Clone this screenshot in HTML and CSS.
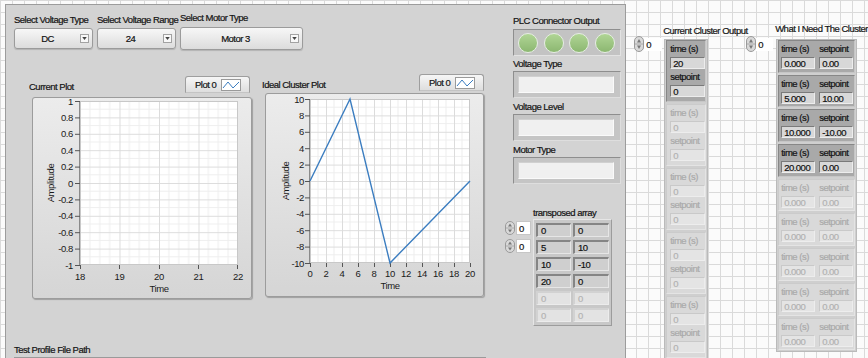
FILE: index.html
```html
<!DOCTYPE html>
<html lang="en">
<head>
    <meta charset="UTF-8">
    <meta name="viewport" content="width=device-width, initial-scale=1.0">
    <title>Test Profile Panel</title>
    <link rel="stylesheet" href="styles.css">
</head>
<body>
<div class="screen">
    <div class="panel">
        <div class="panel-main">
            <div class="selectors">
                <div class="select-group">
                    <div class="field-label">Select Voltage Type</div>
                    <div class="dropdown"><span class="value">DC</span><span class="drop-btn"><svg width="6" height="4" viewBox="0 0 6 4"><path d="M0 0H6L3 4Z" fill="#444"/></svg></span></div>
                </div>
                <div class="select-group">
                    <div class="field-label">Select Voltage Range</div>
                    <div class="dropdown"><span class="value">24</span><span class="drop-btn"><svg width="6" height="4" viewBox="0 0 6 4"><path d="M0 0H6L3 4Z" fill="#444"/></svg></span></div>
                </div>
                <div class="select-group wide">
                    <div class="field-label">Select Motor Type</div>
                    <div class="dropdown"><span class="value">Motor 3</span><span class="drop-btn"><svg width="6" height="4" viewBox="0 0 6 4"><path d="M0 0H6L3 4Z" fill="#444"/></svg></span></div>
                </div>
            </div>

            <div class="plots">
                <div class="plot plot-current">
                    <div class="plot-head">
                        <span class="plot-title">Current Plot</span>
                        <div class="legend"><span>Plot 0</span><svg width="20" height="12" viewBox="0 0 20 12"><rect x="0.5" y="0.5" width="19" height="11" fill="#fff" stroke="#9a9a9a"/><polyline points="2,9 7,3 12,9 18,3" fill="none" stroke="#3b7dc0"/></svg></div>
                    </div>
                    <div class="plot-frame">
                        <svg class="graph" width="220" height="202" viewBox="0 0 220 202">
                            <defs>
                                <pattern id="grid1" x="48" y="4" width="39.5" height="16.4" patternUnits="userSpaceOnUse">
                                    <path d="M9.875 0V16.4M19.75 0V16.4M29.625 0V16.4M0 8.2H39.5" stroke="#eeeeee"/>
                                    <path d="M0.5 0V16.4M0 0.5H39.5" stroke="#dcdcdc"/>
                                </pattern>
                            </defs>
                            <rect x="48" y="4" width="158" height="164" fill="#fff"/>
                            <rect x="48" y="4" width="158" height="164" fill="url(#grid1)"/>
                            <rect x="48.5" y="4.5" width="157" height="163" fill="none" stroke="#c8c8c8"/>
                            <path d="M47.5 4V168.5" stroke="#8a8a8a"/>
                            <path d="M43 4.5H48M43 20.9H48M43 37.3H48M43 53.7H48M43 70.1H48M43 86.5H48M43 102.9H48M43 119.3H48M43 135.7H48M43 152.1H48M43 168.5H48" stroke="#555"/>
                            <path d="M48.5 168V172M87.5 168V172M127.5 168V172M166.5 168V172M205.5 168V172" stroke="#555"/>
                            <g class="tick" text-anchor="end">
                                <text x="41" y="7.5">1</text>
                                <text x="41" y="23.9">0.8</text>
                                <text x="41" y="40.3">0.6</text>
                                <text x="41" y="56.7">0.4</text>
                                <text x="41" y="73.1">0.2</text>
                                <text x="41" y="89.5">0</text>
                                <text x="41" y="105.9">-0.2</text>
                                <text x="41" y="122.3">-0.4</text>
                                <text x="41" y="138.7">-0.6</text>
                                <text x="41" y="155.1">-0.8</text>
                                <text x="41" y="171.5">-1</text>
                            </g>
                            <g class="tick" text-anchor="middle">
                                <text x="48" y="183">18</text>
                                <text x="87.5" y="183">19</text>
                                <text x="127" y="183">20</text>
                                <text x="166.5" y="183">21</text>
                                <text x="206" y="183">22</text>
                                <text x="127" y="195">Time</text>
                                <text transform="translate(22,86) rotate(-90)">Amplitude</text>
                            </g>
                        </svg>
                    </div>
                </div>

                <div class="plot plot-ideal">
                    <div class="plot-head">
                        <span class="plot-title">Ideal Cluster Plot</span>
                        <div class="legend"><span>Plot 0</span><svg width="20" height="12" viewBox="0 0 20 12"><rect x="0.5" y="0.5" width="19" height="11" fill="#fff" stroke="#9a9a9a"/><polyline points="2,9 7,3 12,9 18,3" fill="none" stroke="#3b7dc0"/></svg></div>
                    </div>
                    <div class="plot-frame">
                        <svg class="graph" width="219" height="204" viewBox="0 0 219 204">
                            <defs>
                                <pattern id="grid2" x="45" y="6" width="16" height="16.4" patternUnits="userSpaceOnUse">
                                    <path d="M8 0V16.4M0 8.2H16" stroke="#eeeeee"/>
                                    <path d="M0.5 0V16.4M0 0.5H16" stroke="#dcdcdc"/>
                                </pattern>
                            </defs>
                            <rect x="45" y="6" width="160" height="164" fill="#fff"/>
                            <rect x="45" y="6" width="160" height="164" fill="url(#grid2)"/>
                            <rect x="45.5" y="6.5" width="159" height="163" fill="none" stroke="#c8c8c8"/>
                            <path d="M44.5 6V170.5" stroke="#8a8a8a"/>
                            <path d="M40 6.5H45M40 22.9H45M40 39.3H45M40 55.7H45M40 72.1H45M40 88.5H45M40 104.9H45M40 121.3H45M40 137.7H45M40 154.1H45M40 170.5H45" stroke="#555"/>
                            <path d="M45.5 170V174M61.5 170V174M77.5 170V174M93.5 170V174M109.5 170V174M125.5 170V174M141.5 170V174M157.5 170V174M173.5 170V174M189.5 170V174M205.5 170V174" stroke="#555"/>
                            <polyline points="45,88 85,6 125,170 205,88" fill="none" stroke="#3b7dc0" stroke-width="1.4"/>
                            <g class="tick" text-anchor="end">
                                <text x="39" y="9.5">10</text>
                                <text x="39" y="25.9">8</text>
                                <text x="39" y="42.3">6</text>
                                <text x="39" y="58.7">4</text>
                                <text x="39" y="75.1">2</text>
                                <text x="39" y="91.5">0</text>
                                <text x="39" y="107.9">-2</text>
                                <text x="39" y="124.3">-4</text>
                                <text x="39" y="140.7">-6</text>
                                <text x="39" y="157.1">-8</text>
                                <text x="39" y="173.5">-10</text>
                            </g>
                            <g class="tick" text-anchor="middle">
                                <text x="45" y="183.5">0</text>
                                <text x="61" y="183.5">2</text>
                                <text x="77" y="183.5">4</text>
                                <text x="93" y="183.5">6</text>
                                <text x="109" y="183.5">8</text>
                                <text x="125" y="183.5">10</text>
                                <text x="141" y="183.5">12</text>
                                <text x="157" y="183.5">14</text>
                                <text x="173" y="183.5">16</text>
                                <text x="189" y="183.5">18</text>
                                <text x="205" y="183.5">20</text>
                                <text x="125" y="195.5">Time</text>
                                <text transform="translate(24,88) rotate(-90)">Amplitude</text>
                            </g>
                        </svg>
                    </div>
                </div>
            </div>

            <div class="field-label file-label">Test Profile File Path</div>
            <div class="path-box"></div>
        </div>

        <div class="panel-side">
            <div class="field-label side-label first">PLC Connector Output</div>
            <div class="led-box">
                <span class="led"></span><span class="led"></span><span class="led"></span><span class="led"></span>
            </div>
            <div class="field-label side-label">Voltage Type</div>
            <div class="text-ind"><div class="field"></div></div>
            <div class="field-label side-label">Voltage Level</div>
            <div class="text-ind"><div class="field"></div></div>
            <div class="field-label side-label">Motor Type</div>
            <div class="text-ind"><div class="field"></div></div>

            <div class="field-label array-label">transposed array</div>
            <div class="array2d">
                <div class="index-col">
                    <div class="index boxed">
                        <svg class="spin" width="10" height="14" viewBox="0 0 10 14"><rect x="0.5" y="0.5" width="9" height="13" rx="4.5" fill="#d9d9d9" stroke="#9a9a9a"/><path d="M5 2.5L7 5.5H3Z" fill="#777"/><path d="M5 11.5L7 8.5H3Z" fill="#777"/><path d="M1 7H9" stroke="#aaa"/></svg>
                        <span class="idx-val">0</span>
                    </div>
                    <div class="index boxed">
                        <svg class="spin" width="10" height="14" viewBox="0 0 10 14"><rect x="0.5" y="0.5" width="9" height="13" rx="4.5" fill="#d9d9d9" stroke="#9a9a9a"/><path d="M5 2.5L7 5.5H3Z" fill="#777"/><path d="M5 11.5L7 8.5H3Z" fill="#777"/><path d="M1 7H9" stroke="#aaa"/></svg>
                        <span class="idx-val">0</span>
                    </div>
                </div>
                <div class="matrix">
                    <span class="cell">0</span><span class="cell">0</span>
                    <span class="cell">5</span><span class="cell">10</span>
                    <span class="cell">10</span><span class="cell">-10</span>
                    <span class="cell">20</span><span class="cell">0</span>
                    <span class="cell off">0</span><span class="cell off">0</span>
                    <span class="cell off">0</span><span class="cell off">0</span>
                </div>
            </div>
        </div>
    </div>

    <div class="cluster-area">
        <div class="cluster-group current">
            <div class="index">
                <svg class="spin" width="10" height="16" viewBox="0 0 10 16"><rect x="0.5" y="0.5" width="9" height="15" rx="4.5" fill="#d9d9d9" stroke="#9a9a9a"/><path d="M5 3L7 6.5H3Z" fill="#777"/><path d="M5 13L7 9.5H3Z" fill="#777"/><path d="M1 8H9" stroke="#aaa"/></svg>
                <span class="idx-val">0</span>
            </div>
            <div class="cluster-col">
                <div class="field-label">Current Cluster Output</div>
                <div class="cluster-frame">
                    <div class="cl-item on">
                        <div class="cl-label">time (s)</div><div class="cl-num">20</div>
                        <div class="cl-label">setpoint</div><div class="cl-num">0</div>
                    </div>
                    <div class="cl-item off">
                        <div class="cl-label">time (s)</div><div class="cl-num">0</div>
                        <div class="cl-label">setpoint</div><div class="cl-num">0</div>
                    </div>
                    <div class="cl-item off">
                        <div class="cl-label">time (s)</div><div class="cl-num">0</div>
                        <div class="cl-label">setpoint</div><div class="cl-num">0</div>
                    </div>
                    <div class="cl-item off">
                        <div class="cl-label">time (s)</div><div class="cl-num">0</div>
                        <div class="cl-label">setpoint</div><div class="cl-num">0</div>
                    </div>
                    <div class="cl-item off">
                        <div class="cl-label">time (s)</div><div class="cl-num">0</div>
                        <div class="cl-label">setpoint</div><div class="cl-num">0</div>
                    </div>
                </div>
            </div>
        </div>

        <div class="cluster-group needed">
            <div class="index">
                <svg class="spin" width="10" height="16" viewBox="0 0 10 16"><rect x="0.5" y="0.5" width="9" height="15" rx="4.5" fill="#d9d9d9" stroke="#9a9a9a"/><path d="M5 3L7 6.5H3Z" fill="#777"/><path d="M5 13L7 9.5H3Z" fill="#777"/><path d="M1 8H9" stroke="#aaa"/></svg>
                <span class="idx-val">0</span>
            </div>
            <div class="cluster-col">
                <div class="field-label">What I Need The Cluster</div>
                <div class="cluster-frame">
                    <div class="pair on"><span class="cl-label">time (s)</span><span class="cl-label">setpoint</span><span class="cl-num">0.000</span><span class="cl-num">0.00</span></div>
                    <div class="pair on"><span class="cl-label">time (s)</span><span class="cl-label">setpoint</span><span class="cl-num">5.000</span><span class="cl-num">10.00</span></div>
                    <div class="pair on"><span class="cl-label">time (s)</span><span class="cl-label">setpoint</span><span class="cl-num">10.000</span><span class="cl-num">-10.00</span></div>
                    <div class="pair on"><span class="cl-label">time (s)</span><span class="cl-label">setpoint</span><span class="cl-num">20.000</span><span class="cl-num">0.00</span></div>
                    <div class="pair off"><span class="cl-label">time (s)</span><span class="cl-label">setpoint</span><span class="cl-num">0.000</span><span class="cl-num">0.00</span></div>
                    <div class="pair off"><span class="cl-label">time (s)</span><span class="cl-label">setpoint</span><span class="cl-num">0.000</span><span class="cl-num">0.00</span></div>
                    <div class="pair off"><span class="cl-label">time (s)</span><span class="cl-label">setpoint</span><span class="cl-num">0.000</span><span class="cl-num">0.00</span></div>
                    <div class="pair off"><span class="cl-label">time (s)</span><span class="cl-label">setpoint</span><span class="cl-num">0.000</span><span class="cl-num">0.00</span></div>
                    <div class="pair off"><span class="cl-label">time (s)</span><span class="cl-label">setpoint</span><span class="cl-num">0.000</span><span class="cl-num">0.00</span></div>
                </div>
            </div>
        </div>
    </div>
</div>
</body>
</html>
```

FILE: styles.css
```css
body {
    margin: 0;
    width: 868px;
    height: 358px;
    overflow: hidden;
    font-family: "Liberation Sans", Arial, sans-serif;
    font-size: 9.5px;
    line-height: 12px;
    letter-spacing: -0.5px;
    color: #141414;
    -webkit-text-stroke: 0.2px currentColor;
    background-color: #fbfbfb;
    background-image: linear-gradient(#dadada 1px, transparent 1px), linear-gradient(90deg, #dadada 1px, transparent 1px);
    background-size: 12px 12px;
}
.screen {
    display: flex;
    align-items: flex-start;
}
.panel {
    width: 624px;
    height: 362px;
    margin: 4px 0 0 5px;
    box-sizing: border-box;
    padding-left: 8px;
    background: #d3d3d3;
    border: 1px solid #9c9c9c;
    display: flex;
}
.field-label {
    height: 12px;
    line-height: 12px;
    white-space: nowrap;
}

/* selectors */
.panel-main {
    width: 491px;
    display: flex;
    flex-direction: column;
}
.selectors {
    display: flex;
    gap: 4px;
    margin-top: 9px;
}
.select-group {
    width: 79px;
}
.select-group .field-label {
    margin-bottom: 2px;
}
.select-group.wide {
    width: 123px;
    margin-top: -2px;
}
.select-group.wide .field-label {
    margin-bottom: 3px;
}
.dropdown {
    height: 21px;
    box-sizing: border-box;
    border: 1px solid #9b9b9b;
    border-radius: 3px;
    background: linear-gradient(#f7f7f7, #dcdcdc);
    box-shadow: 0 1px 1px rgba(0,0,0,0.15);
    display: flex;
    align-items: center;
}
.wide .dropdown {
    height: 23px;
}
.dropdown .value {
    flex: 1;
    text-align: center;
    color: #111;
}
.drop-btn {
    width: 9px;
    height: 9px;
    margin-right: 3px;
    box-sizing: border-box;
    border: 1px solid #a2a2a2;
    background: #f8f8f8;
    display: flex;
    align-items: center;
    justify-content: center;
}
.drop-btn svg {
    width: 5px;
    height: 3px;
}

/* plots */
.plots {
    display: flex;
    align-items: flex-start;
    margin-top: 24px;
}
.plot-current {
    width: 223px;
    margin: 2px 0 0 15px;
}
.plot-ideal {
    width: 222px;
    margin-left: 10px;
}
.plot-head {
    height: 17px;
    display: flex;
    justify-content: space-between;
    align-items: flex-end;
}
.plot-current .legend {
    margin-right: 2px;
}
.legend {
    width: 65px;
    height: 17px;
    box-sizing: border-box;
    padding-left: 9px;
    border: 1px solid #9e9e9e;
    border-bottom-color: #c4c4c4;
    border-radius: 3px 3px 0 0;
    background: linear-gradient(#f6f6f6, #dedede);
    display: flex;
    align-items: center;
    gap: 5px;
}
.legend svg {
    display: block;
}
.plot-frame {
    margin-left: 3px;
    border-radius: 3px;
    background: linear-gradient(#ececec, #d5d5d5);
    box-shadow: inset 0 0 0 1px #9c9c9c, 1px 1px 1px rgba(0,0,0,0.25);
}
.plot-current .plot-frame {
    width: 220px;
    height: 202px;
    margin-top: 4px;
}
.plot-ideal .plot-frame {
    width: 219px;
    height: 204px;
    margin-top: 2px;
}
.graph {
    display: block;
}
.tick {
    font-family: "Liberation Sans", Arial, sans-serif;
    font-size: 9.5px;
    letter-spacing: -0.4px;
    fill: #1a1a1a;
}
.file-label {
    margin-top: 45px;
}
.path-box {
    width: 470px;
    height: 20px;
    margin-top: 1px;
    border: 1px solid #9a9a9a;
    background: #efefef;
}

/* right column of the panel */
.panel-side {
    width: 116px;
    display: flex;
    flex-direction: column;
}
.side-label {
    margin: 3px 0 0 8px;
}
.side-label.first {
    margin-top: 10px;
}
.led-box + .side-label {
    margin-top: 2px;
}
.led-box {
    width: 108px;
    height: 27px;
    margin: 2px 0 0 8px;
    box-sizing: border-box;
    padding-left: 4px;
    background: #c3c3c3;
    border: 1px solid;
    border-color: #8e8e8e #e2e2e2 #e2e2e2 #8e8e8e;
    display: flex;
    align-items: center;
    gap: 5.5px;
}
.led {
    width: 20px;
    height: 20px;
    box-sizing: border-box;
    border-radius: 50%;
    border: 1px solid #e6eee2;
    background: linear-gradient(#b0d595, #8cb771);
}
.text-ind {
    width: 108px;
    height: 27px;
    margin: 1px 0 0 8px;
    box-sizing: border-box;
    padding: 4px 6px 4px 4px;
    background: #c5c5c5;
    border: 1px solid;
    border-color: #8e8e8e #dedede #dedede #8e8e8e;
}
.text-ind .field {
    height: 100%;
    box-sizing: border-box;
    background: #f0f0f0;
    border: 1px solid;
    border-color: #d0d0d0 #fafafa #fafafa #d0d0d0;
}
.array-label {
    margin: 23px 0 0 28px;
}
.array2d {
    display: flex;
    gap: 2px;
}
.index-col {
    display: flex;
    flex-direction: column;
    gap: 4px;
    margin-top: 2px;
}
.index {
    display: flex;
    align-items: center;
}
.spin {
    display: block;
}
.idx-val {
    width: 18px;
    height: 13px;
    box-sizing: border-box;
    padding-left: 2px;
    line-height: 13px;
    background: #fff;
}
.index.boxed .idx-val {
    width: 15px;
    height: 14px;
    margin-left: 1px;
    border: 1px solid #c6c6c6;
}
.matrix {
    width: 79px;
    box-sizing: border-box;
    padding: 3px 2px;
    background: #c8c8c8;
    border: 1px solid;
    border-color: #e6e6e6 #9c9c9c #9c9c9c #e6e6e6;
    display: grid;
    grid-template-columns: 35px 36px;
    grid-auto-rows: 14px;
    gap: 3px 2px;
}
.cell {
    box-sizing: border-box;
    padding-left: 3px;
    line-height: 11px;
    background: #cfcfcf;
    border: 1px solid;
    border-width: 2px 1px 1px 2px;
    border-color: #858585 #e6e6e6 #e6e6e6 #858585;
    color: #111;
}
.cell.off {
    background: #e3e3e3;
    border-color: #d2d2d2 #ececec #ececec #d2d2d2;
    color: #b3b3b3;
}

/* cluster arrays outside the panel */
.cluster-area {
    display: flex;
    margin-left: 8px;
}
.cluster-group {
    display: flex;
    align-items: flex-start;
}
.cluster-group .index {
    margin-top: 36px;
}
.current .cluster-col {
    width: 45px;
    margin: 25px 0 0 1px;
}
.current .cluster-col .field-label {
    margin-bottom: 2px;
}
.needed {
    margin-left: 38px;
}
.needed .idx-val {
    width: 17px;
}
.needed .cluster-col {
    margin: 23px 0 0 2px;
}
.needed .cluster-col .field-label {
    margin-bottom: 4px;
}
.cluster-frame {
    margin-left: 1px;
    padding: 0 1px 1px;
    box-sizing: border-box;
    background: #cfcfcf;
    border: 1px solid #bababa;
    display: flex;
    flex-direction: column;
    gap: 2px;
}
.current .cluster-frame {
    width: 44px;
}
.needed .cluster-frame {
    width: 81px;
}
.cl-label {
    height: 13px;
    line-height: 13px;
    white-space: nowrap;
}
.cl-num {
    height: 12px;
    box-sizing: border-box;
    padding-left: 2px;
    line-height: 11px;
    border: 1px solid;
}
.cl-item {
    height: 62px;
    box-sizing: border-box;
    padding: 1px 0 0 3px;
    border: 1px solid;
}
.cl-item .cl-num {
    width: 35px;
    margin-top: 2px;
}
.cl-item .cl-num + .cl-label {
    margin-top: 1px;
}
.pair {
    height: 32.7px;
    box-sizing: border-box;
    padding: 1px 2px 0;
    border: 1px solid;
    display: grid;
    grid-template-columns: 34px 34px;
    grid-template-rows: 13px 12px;
    gap: 2px 4px;
    align-content: start;
}
.on {
    background: #a9a9a9;
    border-color: #878787 #c6c6c6 #c6c6c6 #878787;
    color: #111;
}
.on .cl-num {
    background: #d8d8d8;
    border-color: #7a7a7a #ededed #ededed #7a7a7a;
}
.off {
    background: #d9d9d9;
    border-color: #cbcbcb #e4e4e4 #e4e4e4 #cbcbcb;
    color: #a9a9a9;
}
.off .cl-num {
    background: #e4e4e4;
    border-color: #c9c9c9 #ededed #ededed #c9c9c9;
    color: #b2b2b2;
}
```
